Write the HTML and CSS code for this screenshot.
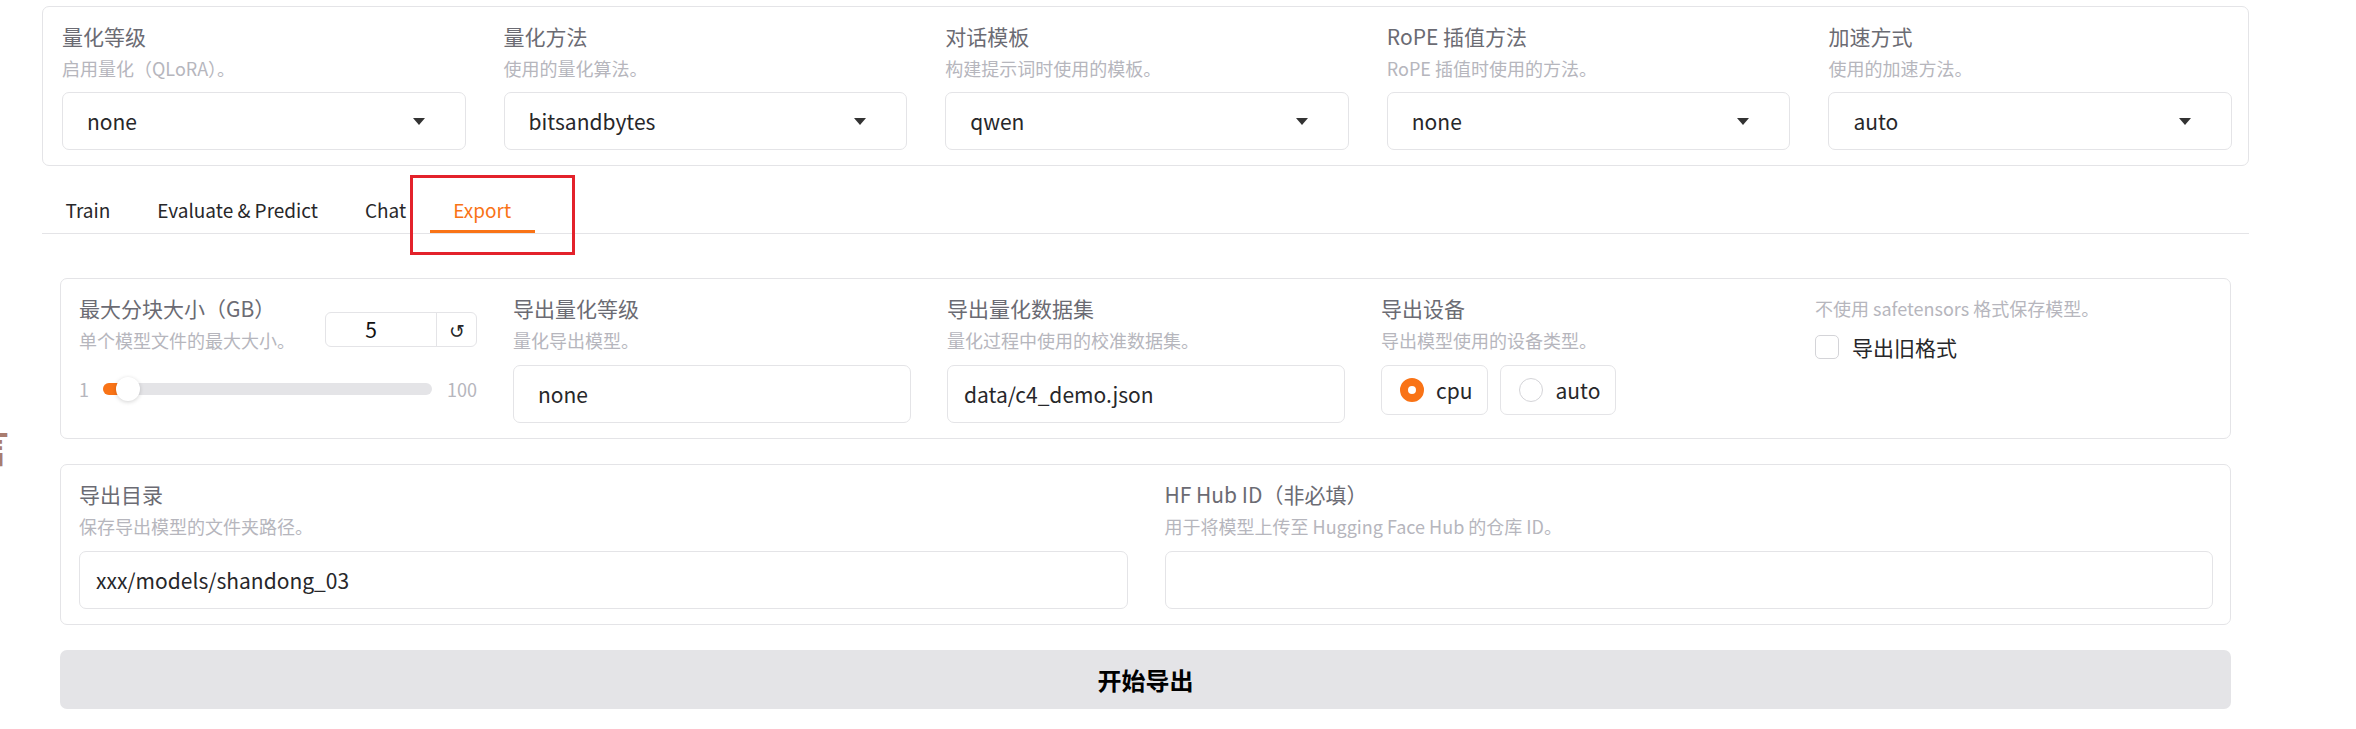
FILE: index.html
```html
<!DOCTYPE html>
<html lang="zh-CN">
<head>
<meta charset="utf-8">
<title>Export</title>
<link rel="stylesheet" href="styles.css">
</head>
<body>
<div class="page">
  <span class="edge-glyph">言</span>
  <main class="app">
    <section class="panel top-panel">
      <div class="field">
        <div class="label">量化等级</div>
        <div class="info">启用量化（QLoRA）。</div>
        <div class="select"><span class="val">none</span><span class="caret"></span></div>
      </div>
      <div class="field">
        <div class="label">量化方法</div>
        <div class="info">使用的量化算法。</div>
        <div class="select"><span class="val">bitsandbytes</span><span class="caret"></span></div>
      </div>
      <div class="field">
        <div class="label">对话模板</div>
        <div class="info">构建提示词时使用的模板。</div>
        <div class="select"><span class="val">qwen</span><span class="caret"></span></div>
      </div>
      <div class="field">
        <div class="label">RoPE 插值方法</div>
        <div class="info">RoPE 插值时使用的方法。</div>
        <div class="select"><span class="val">none</span><span class="caret"></span></div>
      </div>
      <div class="field">
        <div class="label">加速方式</div>
        <div class="info">使用的加速方法。</div>
        <div class="select"><span class="val">auto</span><span class="caret"></span></div>
      </div>
    </section>

    <nav class="tabs">
      <button class="tab">Train</button>
      <button class="tab">Evaluate &amp; Predict</button>
      <button class="tab">Chat</button>
      <button class="tab active">Export</button>
      <div class="annot"></div>
    </nav>

    <div class="tab-body">
      <section class="panel export-row">
        <div class="field">
          <div class="slider-head">
            <div class="head-text">
              <div class="label">最大分块大小（GB）</div>
              <div class="info">单个模型文件的最大大小。</div>
            </div>
            <div class="num"><span class="num-val">5</span><span class="num-reset">↺</span></div>
          </div>
          <div class="slider-row">
            <span class="lim">1</span>
            <div class="track"><div class="fill"></div><div class="thumb"></div></div>
            <span class="lim">100</span>
          </div>
        </div>
        <div class="field">
          <div class="label">导出量化等级</div>
          <div class="info">量化导出模型。</div>
          <div class="select plain"><span class="val">none</span></div>
        </div>
        <div class="field">
          <div class="label">导出量化数据集</div>
          <div class="info">量化过程中使用的校准数据集。</div>
          <div class="textbox">data/c4_demo.json</div>
        </div>
        <div class="field">
          <div class="label">导出设备</div>
          <div class="info">导出模型使用的设备类型。</div>
          <div class="radios">
            <label class="radio"><span class="dot on"></span>cpu</label>
            <label class="radio"><span class="dot"></span>auto</label>
          </div>
        </div>
        <div class="field">
          <div class="info info-top">不使用 safetensors 格式保存模型。</div>
          <div class="check-row"><span class="check"></span><span class="check-text">导出旧格式</span></div>
        </div>
      </section>

      <section class="panel dir-row">
        <div class="field">
          <div class="label">导出目录</div>
          <div class="info">保存导出模型的文件夹路径。</div>
          <div class="textbox">xxx/models/shandong_03</div>
        </div>
        <div class="field">
          <div class="label">HF Hub ID（非必填）</div>
          <div class="info">用于将模型上传至 Hugging Face Hub 的仓库 ID。</div>
          <div class="textbox"></div>
        </div>
      </section>

      <button class="run">开始导出</button>
    </div>
  </main>
</div>
</body>
</html>
```

FILE: styles.css
```css
* { box-sizing: border-box; }

body {
  margin: 0;
  background: #ffffff;
  font-family: "Noto Sans CJK SC", "Noto Sans", sans-serif;
  color: #27272a;
}

.page {
  position: relative;
  width: 2356px;
  height: 729px;
  overflow: hidden;
}

.edge-glyph {
  position: absolute;
  left: -31px;
  top: 420px;
  font-size: 40px;
  font-weight: 700;
  line-height: 50px;
  color: #a97c6f;
}

.app {
  width: 2207px;
  margin-left: 42px;
  padding-top: 6px;
}

.panel {
  border: 1px solid #e4e4e7;
  border-radius: 7px;
  background: #ffffff;
}

.top-panel {
  display: grid;
  grid-template-columns: repeat(5, 1fr);
  column-gap: 38px;
  padding: 15px 16px 15px 19px;
}

.field { min-width: 0; }

.label {
  font-size: 21px;
  line-height: 28px;
  color: #6b6b73;
  white-space: nowrap;
}

.info {
  font-size: 18px;
  line-height: 26px;
  margin-top: 5px;
  color: #b6b6bd;
  white-space: nowrap;
}

.info-top {
  margin-top: 0;
  line-height: 28px;
}

.select {
  margin-top: 11px;
  height: 58px;
  border: 1px solid #e4e4e7;
  border-radius: 7px;
  display: flex;
  align-items: center;
  padding: 0 40px 0 24px;
  font-size: 21px;
  color: #27272a;
}

.select .val { flex: 1; }

.caret {
  width: 0;
  height: 0;
  border-left: 6px solid transparent;
  border-right: 6px solid transparent;
  border-top: 7px solid #333333;
}

.export-row .select { margin-top: 12px; }

/* tabs */
.tabs {
  position: relative;
  display: flex;
  margin-top: 14px;
  border-bottom: 1px solid #e4e4e7;
}

.tab {
  position: relative;
  font-family: inherit;
  font-size: 19px;
  line-height: 30px;
  padding: 15px 23.5px 8px;
  background: none;
  border: 0;
  color: #27272a;
}

.tab.active { color: #f97316; }

.tab.active::after {
  content: "";
  position: absolute;
  left: 0;
  right: 0;
  bottom: 0;
  height: 3px;
  background: #f97316;
}

.annot {
  position: absolute;
  left: 368px;
  top: -5px;
  width: 165px;
  height: 80px;
  border: 3px solid #e3222b;
}

/* tab body */
.tab-body {
  padding: 44px 18px 0;
}

.export-row {
  display: grid;
  grid-template-columns: repeat(5, 1fr);
  column-gap: 36px;
  padding: 15px 17px 15px 18px;
}

.dir-row {
  display: grid;
  grid-template-columns: 1fr 1fr;
  column-gap: 37px;
  padding: 15px 17px 15px 18px;
  margin-top: 25px;
}

.textbox {
  margin-top: 12px;
  height: 58px;
  border: 1px solid #e4e4e7;
  border-radius: 7px;
  display: flex;
  align-items: center;
  padding: 0 16px;
  font-size: 21px;
  color: #27272a;
}

/* slider */
.slider-head {
  display: flex;
  justify-content: space-between;
}

.num {
  margin-top: 18px;
  width: 152px;
  height: 35px;
  display: flex;
  border: 1px solid #e4e4e7;
  border-radius: 6px;
  font-size: 21px;
}

.num-val {
  flex: 1;
  text-align: center;
  line-height: 33px;
  padding-right: 20px;
  color: #111111;
}

.num-reset {
  width: 40px;
  border-left: 1px solid #e4e4e7;
  text-align: center;
  line-height: 33px;
  font-size: 19px;
  color: #27272a;
}

.slider-row {
  margin-top: 21px;
  height: 30px;
  display: flex;
  align-items: center;
}

.lim {
  font-size: 18px;
  color: #b6b6bd;
}

.track {
  position: relative;
  flex: 1;
  height: 12px;
  margin: 0 15px 0 14px;
  border-radius: 6px;
  background: #e4e4e7;
}

.fill {
  width: 24px;
  height: 12px;
  border-radius: 6px 0 0 6px;
  background: #f97316;
}

.thumb {
  position: absolute;
  left: 13px;
  top: -6px;
  width: 24px;
  height: 24px;
  border-radius: 50%;
  background: #ffffff;
  box-shadow: 0 1px 4px rgba(0, 0, 0, 0.18);
}

/* radios */
.radios {
  margin-top: 12px;
  display: flex;
  gap: 12px;
}

.radio {
  height: 50px;
  display: flex;
  align-items: center;
  gap: 12px;
  padding: 0 15px 0 18px;
  border: 1px solid #e4e4e7;
  border-radius: 7px;
  font-size: 21px;
  color: #27272a;
}

.dot {
  width: 24px;
  height: 24px;
  border-radius: 50%;
  border: 1px solid #d4d4d8;
  background: #ffffff;
}

.dot.on {
  border: 8px solid #f97316;
}

/* checkbox */
.check-row {
  margin-top: 10px;
  height: 30px;
  display: flex;
  align-items: center;
}

.check {
  width: 24px;
  height: 24px;
  border: 1px solid #d4d4d8;
  border-radius: 5px;
}

.check-text {
  margin-left: 13px;
  font-size: 21px;
  color: #27272a;
}

/* run button */
.run {
  display: block;
  width: 100%;
  height: 59px;
  margin-top: 25px;
  border: 0;
  border-radius: 7px;
  background: #e4e4e7;
  font-family: inherit;
  font-size: 24px;
  font-weight: 700;
  color: #000000;
}
```
